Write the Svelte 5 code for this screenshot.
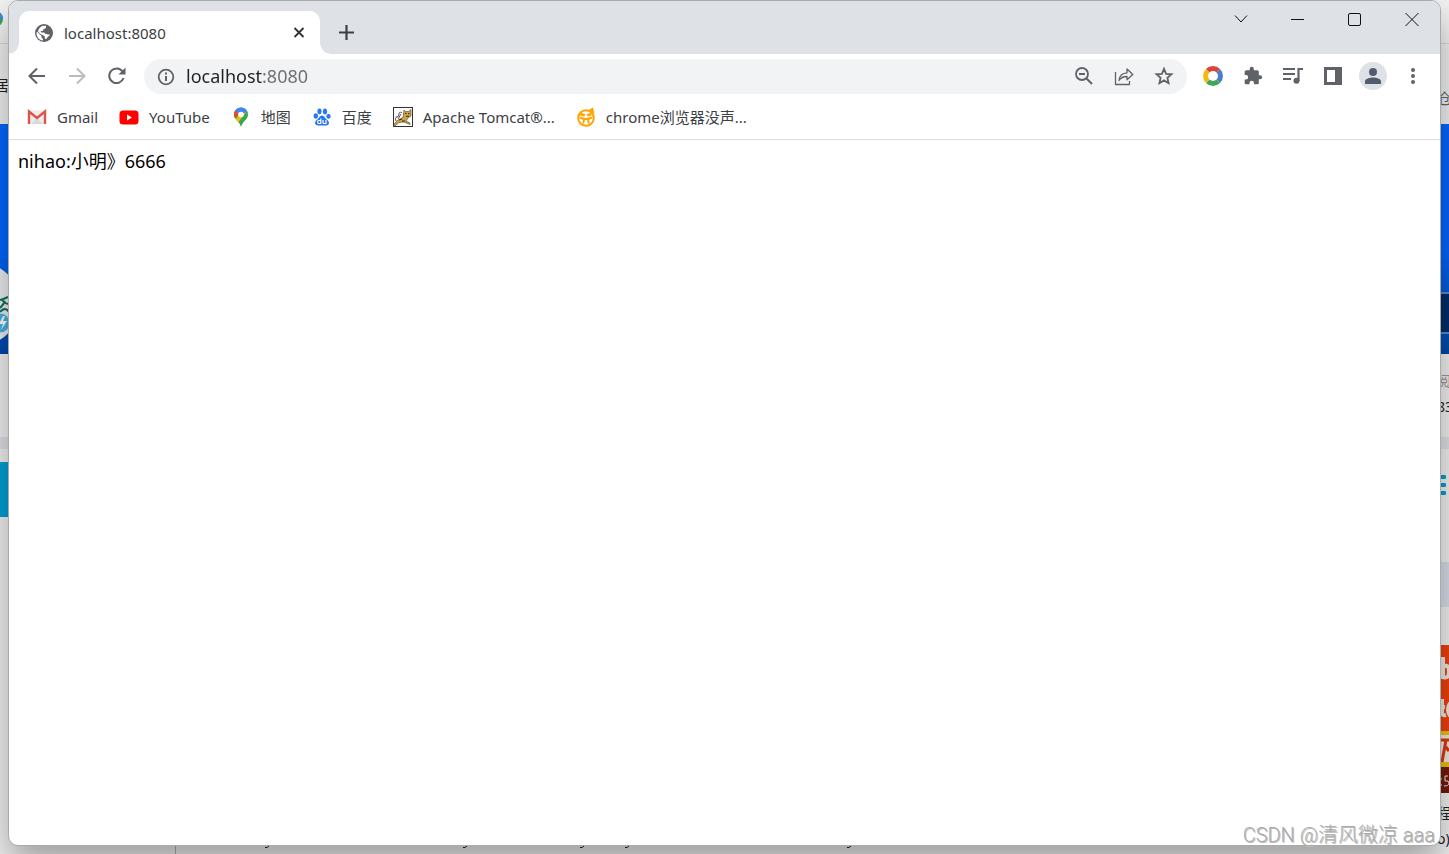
<script lang="ts">
  let url = $state('localhost:8080');

  const bookmarks = [
    { icon: 'gmail', label: 'Gmail' },
    { icon: 'youtube', label: 'YouTube' },
    { icon: 'maps', label: '地图' },
    { icon: 'baidu', label: '百度' },
    { icon: 'tomcat', label: 'Apache Tomcat®...' },
    { icon: 'face', label: 'chrome浏览器没声...' },
  ];

  // descender tips of the code line that runs under the window's lower edge
  const tails = [267, 465, 582, 627, 849];
</script>

<div class="desktop">
  <div class="backdrop" aria-hidden="true">
    <div class="row head">
      <svg width="9" height="16"><circle cx="-5" cy="8" r="8" fill="#34a853" /><path d="M-5 0A8 8 0 0 1 3 8L-5 8Z" fill="#4285f4" /></svg>
    </div>
    <div class="row nav">
      <span class="edge end">居</span>
      <span class="edge low">仓</span>
    </div>
    <div class="row banner">
      <svg class="logo" width="9" height="74">
        <circle cx="-22" cy="38" r="42" fill="#eceef0" />
        <path d="M0 34Q4 33 8 31M2 33Q4 38 9 38M0 42Q4 38 5 35M0 46Q5 40 9 46" stroke="#0d7359" stroke-width="2" fill="none" />
        <circle cx="0" cy="57" r="10" fill="#44b3e6" stroke="#dcebf2" />
        <path d="M3 50L-1 58H3L1 64L7 55H3L5 50Z" fill="#fff" />
      </svg>
      <span class="slot"></span>
    </div>
    <div class="row stats">
      <span></span>
      <span class="edge col"><i>阅</i><b>83</b></span>
    </div>
    <div class="row gap"></div>
    <div class="row menu">
      <span class="cyan"></span>
      <svg width="9" height="24"><path d="M0 1h5q1 0 1 1v2q0 1-1 1H0zM0 9h5q1 0 1 1v2q0 1-1 1H0zM0 17h5q1 0 1 1v2q0 1-1 1H0z" fill="#0b9ccb" /></svg>
    </div>
    <div class="row pale"><span></span><span class="paleend"></span></div>
    <div class="row advert">
      <span></span>
      <svg width="9" height="148">
        <rect width="9" height="148" fill="#ef400d" />
        <path d="M3 12V34M3 22Q9 18 9 27Q9 34 3 32M0 62H5M2 54V68Q2 71 6 70M10 58Q6 65 10 71" stroke="#eee8e2" stroke-width="4" fill="none" />
        <rect y="86" width="9" height="36" fill="#e6c411" />
        <path d="M0 90H9V117H0Z" fill="#f2eadf" />
        <path d="M0 95H9M6 95L2 117M6 102L9 106" stroke="#df3511" stroke-width="3" />
        <rect y="122" width="9" height="26" fill="#731a08" />
        <path d="M1 133v2M1 139v2M8 131H5V136Q9 135 9 138Q9 141 4 141" stroke="#eee" fill="none" />
      </svg>
    </div>
    <div class="row foot">
      <span></span>
      <span class="edge col"><b>程</b><b>o)</b></span>
    </div>
    <svg class="tails" width="900" height="8">
      <path d="M175.500 0V8" stroke="#b0b0b0" />
      {#each tails as x (x)}
        <path d="M{x + 2} 0L{x} 1.500H{x - 2}" stroke="#222" fill="none" />
      {/each}
    </svg>
  </div>

  <div class="window">
    <header class="titlebar">
      <div class="tab">
        <svg class="globe" width="20" height="20" viewBox="0 0 20 20">
          <circle cx="10" cy="10" r="9" fill="#5f6368" />
          <path d="M3 8.500L7.500 13V14.500L9 16V17.500C5 17.200 2.500 14 2.500 10ZM8 3L12 2.800C12.500 5 11.500 6 9.500 6.200L9 8H7V9.500H12L13.500 11.500H16C15.500 13.500 13.500 13 13 15.500L11 16L10.500 13L6.500 11L4 8.500C4.500 6 6 4 8 3Z" fill="#fff" />
          <path d="M4.500 8.500H9.500L11.500 11H14L15 9L17.500 8.500A7.700 7.700 0 0 0 12.500 2.800L12.500 5L9.800 6.500L9 8Z" fill="#5f6368" />
        </svg>
        <span class="tab-title">localhost:8080</span>
        <button class="tab-close" aria-label="Close tab">
          <svg width="20" height="20"><path d="M5.500 5L14.500 14M14.500 5L5.500 14" stroke="#303236" stroke-width="1.800" /></svg>
        </button>
      </div>
      <button class="new-tab" aria-label="New tab">
        <svg width="20" height="20"><path d="M10.500 2V17M3 9.500H18" stroke="#3c4043" stroke-width="2.200" /></svg>
      </button>
      <div class="controls">
        <button aria-label="Search tabs"><svg width="20" height="20"><path d="M4 6.500L10 13L16 6.500" /></svg></button>
        <button aria-label="Minimize"><svg width="20" height="20"><path d="M3 10.500H16" /></svg></button>
        <button aria-label="Maximize"><svg width="20" height="20"><rect x="3.500" y="4.500" width="12" height="12" rx="1.500" /></svg></button>
        <button aria-label="Close"><svg width="20" height="20"><path d="M3.500 4L16.500 17M16.500 4L3.500 17" /></svg></button>
      </div>
    </header>

    <nav class="toolbar">
      <button aria-label="Back"><svg width="20" height="20"><path d="M18 10H3M10 2.500L2.500 10L10 17.500" stroke="#5f6368" stroke-width="2" fill="none" /></svg></button>
      <button aria-label="Forward" disabled><svg width="20" height="20"><path d="M2 10H17M10 2.500L17.500 10L10 17.500" stroke="#babcbe" stroke-width="2" fill="none" /></svg></button>
      <button aria-label="Reload">
        <svg width="20" height="20"><path d="M16.500 12A7.300 7.300 0 1 1 15.500 5.500L17 7" stroke="#5f6368" stroke-width="2" fill="none" /><path d="M18.500 1.500V8.500H11.500Z" fill="#5f6368" /></svg>
      </button>
      <form class="omnibox" onsubmit={(e) => e.preventDefault()}>
        <svg width="20" height="20"><circle cx="10" cy="10" r="7.300" stroke="#5f6368" stroke-width="1.800" fill="none" /><path d="M10 9V14M10 5.500V7.500" stroke="#5f6368" stroke-width="2" /></svg>
        <input type="text" aria-label="Address" bind:value={url} />
        <button type="button" aria-label="Zoom">
          <svg width="20" height="20"><circle cx="8" cy="8" r="6" stroke="#5f6368" stroke-width="1.800" fill="none" /><path d="M5 8H11M12.500 12.500L18 18" stroke="#5f6368" stroke-width="1.900" /></svg>
        </button>
        <button type="button" aria-label="Share">
          <svg width="20" height="20"><path d="M1.500 6V18.500H15.500V15M5 14.500C5.500 9.500 8.500 7 13 6.800V3L18.800 8.500L13 13.800V10.500C9.500 10.500 7 11.500 5 14.500Z" stroke="#5f6368" stroke-width="1.300" fill="none" stroke-linejoin="round" /></svg>
        </button>
        <button type="button" aria-label="Bookmark this page">
          <svg width="20" height="20"><path d="M10 2.800L12.100 7.800L17.500 8.300L13.400 11.900L14.600 17.200L10 14.400L5.400 17.200L6.600 11.900L2.500 8.300L7.900 7.800Z" stroke="#5f6368" stroke-width="1.800" fill="none" /></svg>
        </button>
      </form>
      <button aria-label="Color ring extension">
        <svg width="22" height="22" fill="none" stroke-width="5">
          <path d="M5.700 5.700A7.500 7.500 0 0 1 16.300 5.700" stroke="#db4437" />
          <path d="M16.300 5.700A7.500 7.500 0 0 1 16.300 16.300" stroke="#4a7dcc" />
          <path d="M16.300 16.300A7.500 7.500 0 0 1 5.700 16.300" stroke="#3fa757" />
          <path d="M5.700 16.300A7.500 7.500 0 0 1 5.700 5.700" stroke="#f5b912" />
        </svg>
      </button>
      <button aria-label="Extensions">
        <svg width="20" height="20" viewBox="0 0 24 24"><path fill="#5f6368" d="M20.500 11H19V7c0-1.100-.9-2-2-2h-4V3.500a2.500 2.500 0 0 0-5 0V5H4c-1.100 0-2 .9-2 2v3.800h1.500a2.700 2.700 0 0 1 0 5.400H2V20c0 1.100.9 2 2 2h3.800v-1.500a2.700 2.700 0 0 1 5.400 0V22H17c1.100 0 2-.9 2-2v-4h1.500a2.500 2.500 0 0 0 0-5z" /></svg>
      </button>
      <button aria-label="Media controls">
        <svg width="20" height="20"><path d="M0 3H12M0 8H12M0 13H8" stroke="#5f6368" stroke-width="2" /><path d="M15.500 15V3H20" stroke="#5f6368" stroke-width="2.200" fill="none" /><circle cx="13.500" cy="14.800" r="3" fill="#5f6368" /></svg>
      </button>
      <button aria-label="Side panel">
        <svg width="20" height="20"><path fill="#5f6368" fill-rule="evenodd" d="M1 1H19V19H1ZM4 4V16H12V4Z" /></svg>
      </button>
      <button aria-label="Profile">
        <svg width="28" height="28"><circle cx="14" cy="14" r="14" fill="#dee1e6" /><circle cx="14" cy="10" r="4" fill="#525b70" /><path d="M6 22V19.500C6 16.500 11 15.500 14 15.500S22 16.500 22 19.500V22Z" fill="#525b70" /></svg>
      </button>
      <button aria-label="Menu">
        <svg width="20" height="20" fill="#5f6368"><circle cx="10" cy="4" r="2" /><circle cx="10" cy="10" r="2" /><circle cx="10" cy="16" r="2" /></svg>
      </button>
    </nav>

    <nav class="bookmarks" aria-label="Bookmarks">
      {#each bookmarks as mark (mark.label)}
        <a href="#{mark.icon}">
          <svg width="20" height="20" viewBox="0 0 20 20">
            {#if mark.icon === 'gmail'}
              <path d="M1 3.500H19V17H1Z" fill="#ececec" />
              <path d="M4 17L10 11L16 17Z" fill="#d9d9d9" />
              <path d="M2 17V4.500L10 11L18 4.500V17" stroke="#dd5347" stroke-width="2.400" fill="none" />
            {:else if mark.icon === 'youtube'}
              <rect x="0.500" y="3.500" width="19" height="14" rx="3.500" fill="#f00" />
              <path d="M8 7.500L13 10.500L8 13.500Z" fill="#fff" />
            {:else if mark.icon === 'maps'}
              <path d="M3 7.500A7 7 0 0 1 17 7.500C17 12.500 12 13.500 10 20C8.500 14 3 12.500 3 7.500Z" fill="#34a853" />
              <path d="M3.500 5L8 8L4.500 12.500L7.500 15L15 5.500L10 4Z" fill="#fbbc04" />
              <path d="M4.500 3L8 7L3.500 11C2.500 8 2.800 5 4.500 3Z" fill="#ea4335" />
              <path d="M4.500 3A7 7 0 0 1 16.200 4.200L10 8L8 7Z" fill="#4285f4" />
              <circle cx="10" cy="7.500" r="2.800" fill="#fff" />
            {:else if mark.icon === 'baidu'}
              <g fill="#2779ef">
                <ellipse cx="3.800" cy="9" rx="2.200" ry="2.700" /><ellipse cx="7.500" cy="4.300" rx="2.100" ry="2.900" />
                <ellipse cx="13" cy="4.500" rx="2.100" ry="2.900" /><ellipse cx="16.500" cy="9.300" rx="2.100" ry="2.500" />
                <path d="M10 8.500C12.500 8.500 13 11.500 15.500 13C18.500 16 16.500 19 13.500 18.400H7C3.500 19 1.500 16 4.500 13C7 11.500 7.500 8.500 10 8.500Z" />
              </g>
              <path d="M8.800 11.500V16.500H7C5 16.500 5 13.500 7 13.500H8.800M11 13V15.500Q11 16.500 12 16.500H14V13" stroke="#fff" stroke-width="1.200" fill="none" />
            {:else if mark.icon === 'tomcat'}
              <rect x="0.500" y="0.500" width="19" height="19" fill="#fff" stroke="#333" />
              <path d="M11 3L12.500 4.500H15.500L18 2.500V9L15 11L13 14L17 16V17.500L11 15L6 15.500L2 19L1 17L5 13L10 10.500L10.500 7Z" fill="#cda44b" stroke="#4d4127" stroke-width=".6" />
              <path d="M9 6Q6 4 6 7T4 10Q1 11 3 14M8 7L5 12" stroke="#555" fill="none" />
              <path d="M12 6.500H13.500M15 6.500H16.500M13 9.500L16 9M6 13L9 12M9 14H12" stroke="#332b1d" stroke-width="1" />
              <circle cx="3.500" cy="10" r="1" fill="#888" />
            {:else}
              <circle cx="10" cy="11" r="7.800" stroke="#ffa500" stroke-width="2" fill="#fff" />
              <path d="M12.500 3L17 .5L18.500 7Z" fill="#ffa500" />
              <path d="M4.500 7L8.800 8.500M15.500 7L11.200 8.500" stroke="#ffa500" stroke-width="2.800" />
              <path d="M4 10.500Q10 13.500 16 10.500M7.500 12Q8.500 14 7 16.500M12.500 12Q11.500 14 13 16.500" stroke="#ffa500" stroke-width="2" fill="none" />
            {/if}
          </svg>
          <span>{mark.label}</span>
        </a>
      {/each}
    </nav>

    <main>nihao:小明》6666</main>
  </div>

  <span class="watermark">CSDN @清风微凉 aaa</span>
</div>

<style>
  :global(body) {
    background: #f2f2f2;
  }
  .desktop {
    position: relative;
    display: flex;
    box-sizing: border-box;
    min-height: 100vh;
    padding: 0 8px 8px;
    overflow: hidden;
    font-family: 'Noto Sans', 'Noto Sans CJK SC', sans-serif;
    font-size: 15px;
    color: #3c4043;
  }

  .backdrop {
    position: absolute;
    inset: 0;
    display: flex;
    flex-direction: column;
    background: #f2f2f2;
    overflow: hidden;
  }
  .row {
    display: flex;
    justify-content: space-between;
    flex: none;
    box-sizing: border-box;
  }
  .head {
    height: 44px;
    padding-top: 11px;
    border-bottom: 1px solid #d8d8d8;
  }
  .nav {
    height: 80px;
    padding-top: 28px;
  }
  .banner {
    height: 230px;
    background: linear-gradient(#0066ff 0, #0066ff 55%, #0048a8);
  }
  .logo {
    margin-top: 142px;
  }
  .slot {
    width: 9px;
    height: 38px;
    margin-top: 168px;
    background: #002c68;
    border: solid #5c8ac8;
    border-width: 2px 0;
  }
  .stats {
    height: 83px;
    padding-top: 14px;
  }
  .gap {
    height: 12px;
    background: #e0e2e6;
  }
  .menu {
    height: 113px;
    padding-top: 13px;
  }
  .cyan {
    width: 9px;
    height: 55px;
    background: #00a1d6;
  }
  .menu svg {
    margin-top: 12px;
  }
  .pale {
    height: 83px;
  }
  .paleend {
    width: 9px;
    height: 45px;
    background: #d9deeb;
  }
  .advert {
    height: 148px;
  }
  .foot {
    padding-top: 7px;
  }
  .edge {
    display: flex;
    width: 12px;
    white-space: nowrap;
    line-height: 26px;
    color: #222;
  }
  .end {
    justify-content: flex-end;
    width: 9px;
  }
  .low {
    padding-top: 13px;
    color: #666;
  }
  .col {
    flex-direction: column;
  }
  .col i,
  .col b {
    font-style: normal;
    font-weight: 400;
    font-size: 14px;
  }
  .col i {
    color: #999;
  }
  .tails {
    position: absolute;
    left: 0;
    bottom: 0;
  }

  .window {
    position: relative;
    display: flex;
    flex-direction: column;
    flex: 1;
    min-width: 0;
    background: #fff;
    border: 1px solid #aaa;
    border-radius: 10px;
    box-shadow: 0 18px 36px rgba(0, 0, 0, 0.35);
    overflow: hidden;
  }
  button {
    display: flex;
    align-items: center;
    justify-content: center;
    flex: none;
    width: 40px;
    height: 35px;
    padding: 0;
    border: 0;
    background: none;
  }

  .titlebar {
    display: flex;
    align-items: flex-end;
    height: 53px;
    padding-left: 10px;
    background: #dee1e6;
  }
  .tab {
    position: relative;
    display: flex;
    align-items: center;
    gap: 10px;
    box-sizing: border-box;
    width: 301px;
    height: 43px;
    padding: 0 11px 0 15px;
    background: #fff;
    border-radius: 10px 10px 0 0;
  }
  .tab::before,
  .tab::after {
    content: '';
    position: absolute;
    bottom: 0;
    width: 10px;
    height: 10px;
  }
  .tab::before {
    right: 100%;
    background: radial-gradient(circle at 0 0, #dee1e6 9px, #fff 10px);
  }
  .tab::after {
    left: 100%;
    background: radial-gradient(circle at 100% 0, #dee1e6 9px, #fff 10px);
  }
  .tab-title {
    flex: 1;
  }
  .tab-close {
    width: 20px;
  }
  .new-tab {
    height: 43px;
    margin-left: 6px;
  }
  .controls {
    display: flex;
    align-self: flex-start;
    margin-left: auto;
  }
  .controls button {
    width: 57px;
    height: 36px;
  }
  .controls svg {
    fill: none;
    stroke: #111;
    stroke-width: 1;
  }

  .toolbar {
    display: flex;
    align-items: center;
    padding: 5px 7px 5px 8px;
  }
  .toolbar button {
    height: 34px;
    padding-bottom: 1px;
  }
  .omnibox {
    display: flex;
    align-items: center;
    flex: 1;
    min-width: 0;
    height: 35px;
    margin: 0 6px 0 7px;
    padding: 0 3px 0 12px;
    background: #f1f3f4;
    border-radius: 18px;
  }
  .omnibox input {
    flex: 1;
    min-width: 0;
    margin-left: 10px;
    padding: 0 0 2px;
    border: 0;
    outline: 0;
    font: inherit;
    font-size: 18px;
    /* host part dark, port part grey */
    color: transparent;
    caret-color: #202124;
    background: linear-gradient(90deg, #202124 76px, #6b6f73 76px);
    background-clip: text;
  }

  .bookmarks {
    display: flex;
    gap: 21px;
    height: 40px;
    padding-left: 18px;
    border-bottom: 1px solid #dadce0;
  }
  .bookmarks a {
    display: flex;
    align-items: center;
    gap: 10px;
    height: 35px;
    color: inherit;
    text-decoration: none;
    white-space: nowrap;
  }

  main {
    padding: 8px 9px;
    font-size: 18px;
    line-height: 26px;
    color: #000;
  }

  .watermark {
    position: absolute;
    right: 14px;
    bottom: 5px;
    font-family: Roboto, 'Noto Sans CJK SC', sans-serif;
    font-size: 20px;
    font-weight: 300;
    line-height: 28px;
    color: #aaa;
    text-shadow: 1px 1px 0 #bbb;
  }
</style>
